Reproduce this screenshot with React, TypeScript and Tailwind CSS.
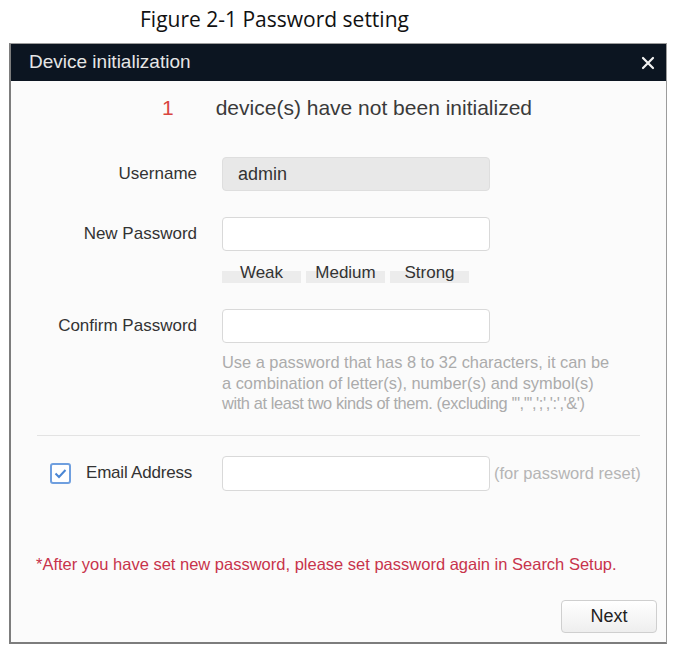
import React from 'react';

const Field = ({ gray, value }: { gray?: boolean; value?: string }) => (
    <div
        className={`w-[268px] h-[34px] rounded-[4px] border flex items-center px-[15px] text-[18px] text-[#333] ${
            gray ? 'bg-[#e8e8e8] border-[#dedede]' : 'bg-white border-[#d9d9d9]'
        }`}
    >
        {value}
    </div>
);

const Label = ({ children }: { children: React.ReactNode }) => (
    <div className="w-[211px] pr-[25px] text-right text-[17px] text-[#333] shrink-0">{children}</div>
);

export default function App() {
    return (
        <div className="w-[684px] h-[664px] bg-white font-['Liberation_Sans',Arial,sans-serif]">
            {/* caption */}
            <div className="pt-[4px] h-[43px] pl-[140px] font-['Open_Sans',sans-serif] text-[21px] leading-[30px] text-[#111]">
                Figure 2-1 Password setting
            </div>

            {/* dialog */}
            <div className="ml-[9px] w-[658px] h-[601px] flex flex-col border border-[#9c9c9c] border-l-2 border-b-2 border-l-[#7d7d7d] border-b-[#7d7d7d] bg-[#fbfbfb]">
                <div className="h-[37px] bg-[#0c1521] flex items-center justify-between pl-[18px] pr-[10px] text-[19px] text-[#e6e6e6] shrink-0">
                    <span>Device initialization</span>
                    <svg width="14" height="14" viewBox="0 0 14 14" className="mr-[1px]">
                        <path d="M2 2 L12 12 M12 2 L2 12" stroke="#f2f2f2" strokeWidth="2.2" strokeLinecap="round" />
                    </svg>
                </div>

                <div className="flex flex-col">
                    <div className="mt-[15px] h-[24px] flex items-center text-[21px] text-[#3a3a3a]">
                        <span className="ml-[151px] text-[#d9453f]">1</span>
                        <span className="ml-[42px]">device(s) have not been initialized</span>
                    </div>

                    <div className="mt-[37px] flex items-center">
                        <Label>Username</Label>
                        <Field gray value="admin" />
                    </div>

                    <div className="mt-[26px] flex items-center">
                        <Label>New Password</Label>
                        <Field />
                    </div>

                    <div className="mt-[14px] flex">
                        <div className="w-[211px] shrink-0" />
                        <div className="flex gap-[5px] text-[17px] text-[#333]">
                            {['Weak', 'Medium', 'Strong'].map((s) => (
                                <div
                                    key={s}
                                    className="w-[79px] h-[18px] leading-[16px] text-center bg-[linear-gradient(to_bottom,transparent_6px,#ececec_6px)]"
                                >
                                    {s}
                                </div>
                            ))}
                        </div>
                    </div>

                    <div className="mt-[26px] flex items-center">
                        <Label>Confirm Password</Label>
                        <Field />
                    </div>

                    <div className="mt-[9px] ml-[211px] whitespace-nowrap text-[16.4px] leading-[20.5px] text-[#ababab]">
                        <div>Use a password that has 8 to 32 characters, it can be</div>
                        <div>a combination of letter(s), number(s) and symbol(s)</div>
                        <div className="tracking-[-0.4px]">with at least two kinds of them. (excluding '",''',';',':','&')</div>
                    </div>

                    <div className="mt-[21px] ml-[26px] w-[603px] h-px bg-[#e3e3e3]" />

                    <div className="mt-[20px] flex items-center">
                        <div className="w-[211px] shrink-0 flex items-center pl-[39px]">
                            <div className="w-[21px] h-[21px] rounded-[3px] border-2 border-[#6f9fdf] bg-white flex items-center justify-center">
                                <svg width="13" height="11" viewBox="0 0 13 11">
                                    <path d="M1.5 5.5 L5 9 L11.5 2" fill="none" stroke="#4a86d4" strokeWidth="2" />
                                </svg>
                            </div>
                            <span className="ml-[15px] text-[17px] text-[#333] tracking-[-0.2px]">Email Address</span>
                        </div>
                        <div className="w-[268px] h-[35px] rounded-[4px] border border-[#d9d9d9] bg-white" />
                        <span className="ml-[4px] text-[16.5px] text-[#b5b5b5]">(for password reset)</span>
                    </div>

                    <div className="mt-[63px] ml-[25px] h-[20px] leading-[20px] text-[16.5px] text-[#c8334b]">
                        *After you have set new password, please set password again in Search Setup.
                    </div>

                    <div className="mt-[26px] flex justify-end pr-[9px]">
                        <button className="w-[96px] h-[33px] rounded-[4px] border border-[#cfcfcf] bg-[linear-gradient(to_bottom,#ffffff,#eeeeee)] text-[18px] text-[#222]">
                            Next
                        </button>
                    </div>
                </div>
            </div>
        </div>
    );
}
